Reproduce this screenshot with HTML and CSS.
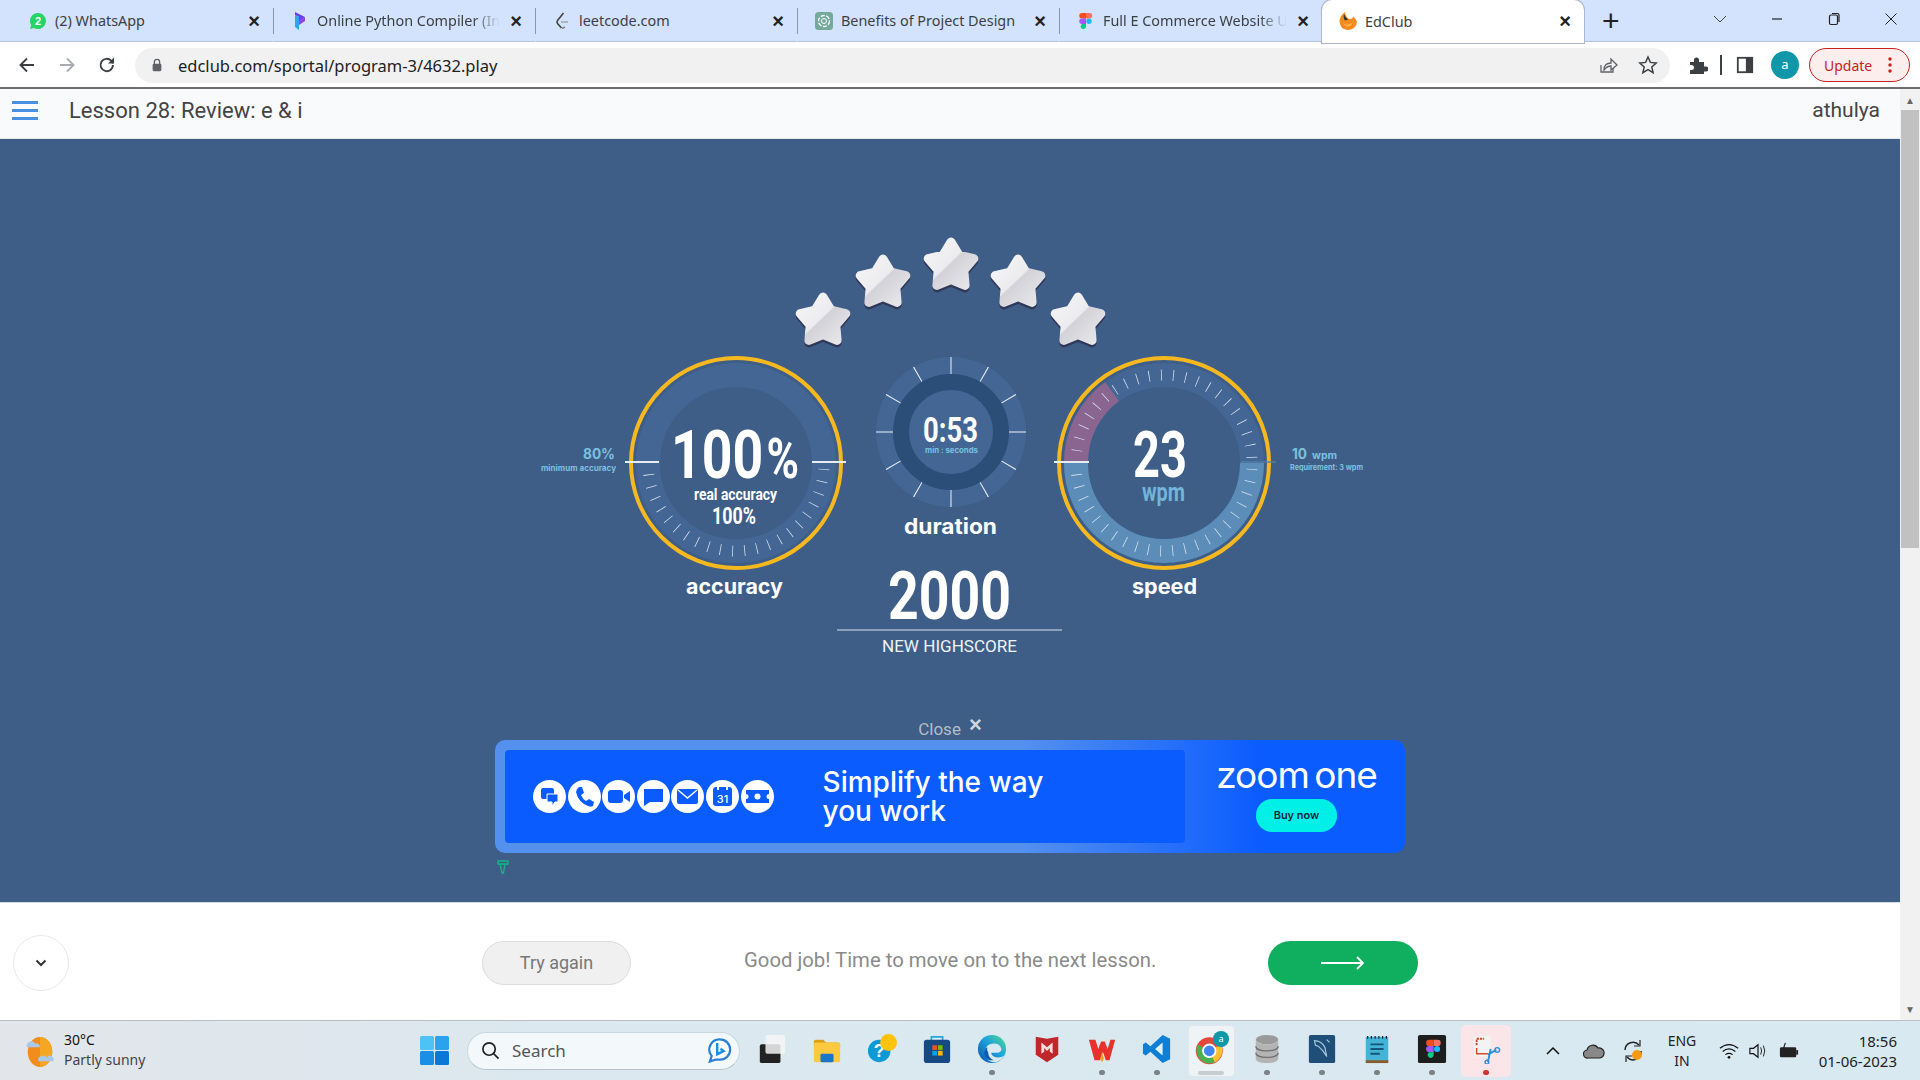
FILE: index.html
```html
<!DOCTYPE html>
<html>
  <head>
    <meta charset='utf-8'>
    <meta name="viewport" content="width=device-width,initial-scale=1.0">
    <title>EdClub</title>
    <link rel="stylesheet" href="styles.css">
  </head>
  <body>
    <!-- browser tabs -->
    <div class="tabbar">
      <div class="tab">
        <svg class="tab-icon" viewBox="0 0 18 18"><path d="M9 1a8 8 0 0 0-6.800 12.200L1 17l3.900-1.100A8 8 0 1 0 9 1z" fill="#25d366"/><text x="9" y="13" class="tab-badge">2</text></svg>
        <span class="tab-title">(2) WhatsApp</span>
        <span class="tab-close">×</span>
      </div>
      <div class="tab">
        <svg class="tab-icon" viewBox="0 0 18 18"><path d="M4 0l10 5-6 5V5L4 3z" fill="#6d3fe8"/><path d="M8 10l6-5v4L8 13z" fill="#8a3fe8"/><path d="M4 3l4 2v13l-4-3z" fill="#2aa7f0"/></svg>
        <span class="tab-title tab-cut">Online Python Compiler (In</span>
        <span class="tab-close">×</span>
      </div>
      <div class="tab">
        <svg class="tab-icon" viewBox="0 0 18 18"><path d="M10.500 1L4.500 8.500q-1 1.500 0 3l4 4.500" fill="none" stroke="#444" stroke-width="1.600"/><path d="M8 10h7" stroke="#aaa" stroke-width="1.600"/><path d="M9 16.500l3-1.500" stroke="#888" stroke-width="1.600"/></svg>
        <span class="tab-title">leetcode.com</span>
        <span class="tab-close">×</span>
      </div>
      <div class="tab">
        <svg class="tab-icon" viewBox="0 0 18 18"><rect x="0" y="0" width="18" height="18" rx="3.500" fill="#74aa9c"/><circle cx="9" cy="9" r="5.500" fill="none" stroke="#fff" stroke-width="1.300" stroke-dasharray="4 1.500"/><circle cx="9" cy="9" r="2.500" fill="none" stroke="#fff" stroke-width="1"/></svg>
        <span class="tab-title">Benefits of Project Design</span>
        <span class="tab-close">×</span>
      </div>
      <div class="tab">
        <svg class="tab-icon" viewBox="0 0 18 18"><use href="#figma-mark"/></svg>
        <span class="tab-title tab-cut">Full E Commerce Website U</span>
        <span class="tab-close">×</span>
      </div>
      <div class="tab tab-active">
        <svg class="tab-icon" viewBox="0 0 18 18"><path d="M6 0q-5 3.500-5.500 9Q1 17.500 9 18q8-.5 9-8-.5-3-4-5.500Q14 7 11 7 7 6.500 6 0z" fill="#f58a1f"/><path d="M5 2Q4 6 6 8.500L9 7.500Q6.500 6 5 2z" fill="#333"/><path d="M4 11q4 4 10-1-2 5-6 4.500-3-.5-4-3.500z" fill="#ffb347"/></svg>
        <span class="tab-title">EdClub</span>
        <span class="tab-close">×</span>
      </div>
      <span class="tab-new">+</span>
      <div class="win-controls">
        <svg viewBox="0 0 14 14" class="win-icon"><path d="M1 4l6 6 6-6" fill="none" stroke="#444" stroke-width="1"/></svg>
        <svg viewBox="0 0 14 14" class="win-icon"><path d="M2 7h10" stroke="#222" stroke-width="1.200"/></svg>
        <svg viewBox="0 0 14 14" class="win-icon"><rect x="2.500" y="3" width="8" height="9.500" rx="1.500" fill="none" stroke="#222" stroke-width="1.200"/><path d="M5 1.500h5.500q1.500 0 1.500 1.500v7" fill="none" stroke="#222" stroke-width="1.200"/></svg>
        <svg viewBox="0 0 14 14" class="win-icon"><path d="M1.500 1.500l11 11M12.500 1.500l-11 11" stroke="#222" stroke-width="1"/></svg>
      </div>
    </div>

    <!-- address bar -->
    <div class="toolbar">
      <svg class="nav-icon" viewBox="0 0 20 20"><path d="M17 10H4M10 3.500L3.500 10l6.500 6.500" fill="none" stroke="#3c4043" stroke-width="1.900"/></svg>
      <svg class="nav-icon" viewBox="0 0 20 20"><path d="M3 10h13M10 3.500l6.500 6.500-6.500 6.500" fill="none" stroke="#a8abaf" stroke-width="1.900"/></svg>
      <svg class="nav-icon" viewBox="0 0 20 20"><path d="M16 10a6.200 6.200 0 1 1-1.800-4.400L16.500 8" fill="none" stroke="#3c4043" stroke-width="1.900"/><path d="M17 2.500V8.500h-6z" fill="#3c4043"/></svg>
      <div class="omnibox">
        <svg class="lock" viewBox="0 0 12 16"><path d="M3 7V4.500a3 3 0 0 1 6 0V7" fill="none" stroke="#5f6368" stroke-width="1.500"/><rect x="1" y="6.500" width="10" height="8.500" rx="1.500" fill="#5f6368"/></svg>
        <span class="url">edclub.com/sportal/program-3/4632.play</span>
        <svg class="omni-icon" viewBox="0 0 20 20"><path d="M3 10v7h12v-4" fill="none" stroke="#5f6368" stroke-width="1.300"/><path d="M6 15q0-7 7-7V4l6 6-6 5v-4q-4 0-7 4z" fill="none" stroke="#5f6368" stroke-width="1.300"/></svg>
        <svg class="omni-icon" viewBox="0 0 20 20"><path d="M10 2l2.400 5.400 5.800.6-4.400 3.900 1.300 5.800L10 14.700l-5.100 3 1.300-5.800L1.800 8l5.800-.6z" fill="none" stroke="#3c4043" stroke-width="1.500"/></svg>
      </div>
      <svg class="ext-icon" viewBox="0 0 20 20"><path d="M2 7h4V5a2.500 2.500 0 0 1 5 0v2h5v4.500h2a2.500 2.500 0 0 1 0 5h-2V19H2v-4h1.500a2.500 2.500 0 0 0 0-5H2z" fill="#3c4043"/></svg>
      <span class="tool-sep"></span>
      <svg class="side-icon" viewBox="0 0 20 20"><rect x="2" y="2" width="16" height="16" fill="none" stroke="#3c4043" stroke-width="2"/><rect x="11" y="2" width="7" height="16" fill="#3c4043"/></svg>
      <span class="avatar">a</span>
      <span class="update">Update<svg class="update-dots" viewBox="0 0 4 18"><circle cx="2" cy="3" r="1.700"/><circle cx="2" cy="9" r="1.700"/><circle cx="2" cy="15" r="1.700"/></svg></span>
    </div>

    <div class="window">
      <div class="page">
        <header class="lesson-head">
          <span class="burger"><i></i><i></i><i></i></span>
          <h1 class="lesson-title">Lesson 28: Review: e &amp; i</h1>
          <span class="lesson-user">athulya</span>
        </header>

        <main class="stage">
          <!-- stars and dials, viewBox uses page coordinates -->
          <svg class="results" viewBox="570 240 760 440">
            <defs>
              <linearGradient id="star-fill" x1="0" y1="0" x2="1" y2="1">
                <stop offset="0" stop-color="#f5f5f7"/>
                <stop offset=".47" stop-color="#ececef"/>
                <stop offset=".5" stop-color="#d2d2d8"/>
                <stop offset="1" stop-color="#e8e8ec"/>
              </linearGradient>
              <g id="star">
                <polygon points="0,-24 7.900,-10.900 22.800,-7.400 12.800,4.200 14.100,19.400 0,13.500 -14.100,19.400 -12.800,4.200 -22.800,-7.400 -7.900,-10.900" transform="translate(0,2.500)" fill="#2c2c4c" stroke="#2c2c4c" stroke-width="9" stroke-linejoin="round" opacity=".75"/>
                <polygon points="0,-24 7.900,-10.900 22.800,-7.400 12.800,4.200 14.100,19.400 0,13.500 -14.100,19.400 -12.800,4.200 -22.800,-7.400 -7.900,-10.900" fill="url(#star-fill)" stroke="url(#star-fill)" stroke-width="9" stroke-linejoin="round"/>
              </g>
              <clipPath id="lower-half"><rect x="570" y="462" width="760" height="120"/></clipPath>
            </defs>

            <use href="#star" x="823" y="320"/>
            <use href="#star" x="883" y="282"/>
            <use href="#star" x="951" y="265"/>
            <use href="#star" x="1018" y="282"/>
            <use href="#star" x="1078" y="320"/>

            <!-- accuracy -->
            <circle cx="736" cy="462" r="88" class="ring" fill="none"/>
            <circle cx="736" cy="462" r="88" class="ticks" pathLength="360" clip-path="url(#lower-half)"/>
            <circle cx="736" cy="462" r="105" class="gold"/>
            <path d="M625 461h34M812 461h34" class="mark"/>
            <text x="671" y="477" class="big" font-size="67" textLength="128" lengthAdjust="spacingAndGlyphs">100<tspan font-size="55" dx="4">%</tspan></text>
            <text x="694" y="499" class="small-bold" font-size="16" textLength="83" lengthAdjust="spacingAndGlyphs">real accuracy</text>
            <text x="712" y="523" class="big" font-size="23" textLength="44" lengthAdjust="spacingAndGlyphs">100%</text>
            <text x="686" y="593" class="dial-name" textLength="97" lengthAdjust="spacingAndGlyphs">accuracy</text>
            <text x="583" y="458" class="hint-big" textLength="32" lengthAdjust="spacingAndGlyphs">80%</text>
            <text x="541" y="470" class="hint" textLength="75" lengthAdjust="spacingAndGlyphs">minimum accuracy</text>

            <!-- duration -->
            <circle cx="951" cy="431" r="75" class="ring-fill"/>
            <circle cx="951" cy="431" r="66.500" class="spokes" pathLength="360"/>
            <circle cx="951" cy="431" r="50" fill="none" stroke="#2a4e78" stroke-width="16"/>
            <text x="923" y="441" class="big" font-size="35" textLength="55" lengthAdjust="spacingAndGlyphs">0:53</text>
            <text x="925" y="452" class="hint" textLength="53" lengthAdjust="spacingAndGlyphs">min : seconds</text>
            <text x="904" y="533" class="dial-name" textLength="93" lengthAdjust="spacingAndGlyphs">duration</text>

            <!-- score -->
            <text x="888" y="618" class="big" font-size="66" textLength="123" lengthAdjust="spacingAndGlyphs">2000</text>
            <path d="M837 629h225" stroke="#8ba0bb" stroke-width="2"/>
            <text x="882" y="651" class="score-label" textLength="135" lengthAdjust="spacingAndGlyphs">NEW HIGHSCORE</text>

            <!-- speed -->
            <circle cx="1164" cy="462" r="88" class="ring" fill="none"/>
            <circle cx="1164" cy="462" r="88" class="ring-speed" clip-path="url(#lower-half)"/>
            <path d="M1064 462A100 100 0 0 1 1105 381L1119 400A76 76 0 0 0 1088 462z" fill="#8a6590"/>
            <circle cx="1164" cy="462" r="88" class="ticks" pathLength="360"/>
            <circle cx="1164" cy="462" r="105" class="gold"/>
            <path d="M1054 461h35" class="mark"/>
            <path d="M1241 461h35" stroke="#4f7ea5" stroke-width="1.500"/>
            <text x="1133" y="476" class="big" font-size="65" textLength="54" lengthAdjust="spacingAndGlyphs">23</text>
            <text x="1142" y="500" class="wpm" textLength="43" lengthAdjust="spacingAndGlyphs">wpm</text>
            <text x="1132" y="593" class="dial-name" textLength="65" lengthAdjust="spacingAndGlyphs">speed</text>
            <text x="1292" y="458" class="hint-big" textLength="15" lengthAdjust="spacingAndGlyphs">10</text>
            <text x="1312" y="458" class="hint hint-unit" textLength="25" lengthAdjust="spacingAndGlyphs">wpm</text>
            <text x="1290" y="469" class="hint" textLength="73" lengthAdjust="spacingAndGlyphs">Requirement: 3 wpm</text>
          </svg>

          <div class="close-row">Close <span class="close-x">×</span></div>

          <div class="ad">
            <div class="ad-panel">
              <div class="ad-icons">
                <svg class="ad-icon" viewBox="0 0 33 33"><circle cx="16.500" cy="16.500" r="16.500" fill="#fff"/><rect x="8" y="8" width="13" height="11" rx="2" fill="#0b5cff"/><path d="M14 14h11v8h-3l-3 4v-4h-5z" fill="#0b5cff" stroke="#fff"/></svg>
                <svg class="ad-icon" viewBox="0 0 33 33"><circle cx="16.500" cy="16.500" r="16.500" fill="#fff"/><path d="M11 7l3 0 2 6-3 2q1.500 4 5 6l3-2 5 3-1 4q-2 1-5 0-10-4-12-14 0-3 3-5z" fill="#0b5cff"/></svg>
                <svg class="ad-icon" viewBox="0 0 33 33"><circle cx="16.500" cy="16.500" r="16.500" fill="#fff"/><rect x="6" y="10" width="15" height="13" rx="3" fill="#0b5cff"/><path d="M22 15l6-4v11l-6-4z" fill="#0b5cff"/></svg>
                <svg class="ad-icon" viewBox="0 0 33 33"><circle cx="16.500" cy="16.500" r="16.500" fill="#fff"/><path d="M7 9h19v13H13l-6 4z" fill="#0b5cff"/></svg>
                <svg class="ad-icon" viewBox="0 0 33 33"><circle cx="16.500" cy="16.500" r="16.500" fill="#fff"/><rect x="6" y="9" width="21" height="15" rx="2" fill="#0b5cff"/><path d="M7 10l9.500 8 9.500-8" fill="none" stroke="#fff" stroke-width="1.500"/></svg>
                <svg class="ad-icon" viewBox="0 0 33 33"><circle cx="16.500" cy="16.500" r="16.500" fill="#fff"/><rect x="7" y="7" width="19" height="19" rx="3" fill="#0b5cff"/><path d="M12 5v5M21 5v5" stroke="#fff" stroke-width="2"/><text x="16.500" y="23" class="ad-cal">31</text></svg>
                <svg class="ad-icon" viewBox="0 0 33 33"><circle cx="16.500" cy="16.500" r="16.500" fill="#fff"/><path d="M5 10h23v4a2.500 2.500 0 0 0 0 5v4H5v-4a2.500 2.500 0 0 0 0-5z" fill="#0b5cff"/><circle cx="16.500" cy="16.500" r="3" fill="#fff"/></svg>
              </div>
              <p class="ad-head">Simplify the way<br>you work</p>
            </div>
            <div class="ad-side">
              <span class="ad-logo">zoom one</span>
              <span class="ad-buy">Buy now</span>
            </div>
          </div>
          <svg class="ad-mark" viewBox="0 0 12 14"><path d="M1 1h10v3H1zM3 4l2 9h1.500L8 4" fill="none" stroke="#12b886" stroke-width="1.300"/></svg>
        </main>

        <footer class="actions">
          <span class="collapse"><svg viewBox="0 0 12 8" class="collapse-icon"><path d="M1.500 1.500L6 6l4.500-4.500" fill="none" stroke="#333" stroke-width="2"/></svg></span>
          <span class="retry">Try again</span>
          <span class="message">Good job! Time to move on to the next lesson.</span>
          <span class="next"><svg viewBox="0 0 44 14" class="next-icon"><path d="M0 7h42M36 1l6 6-6 6" fill="none" stroke="#fff" stroke-width="1.800"/></svg></span>
        </footer>
      </div>

      <div class="scrollbar">
        <span class="scroll-arrow">▲</span>
        <span class="scroll-thumb"></span>
        <span class="scroll-arrow scroll-down">▼</span>
      </div>
    </div>

    <!-- windows taskbar -->
    <div class="taskbar">
      <div class="weather">
        <svg class="weather-icon" viewBox="0 0 34 36"><ellipse cx="17" cy="19" rx="13" ry="16" fill="#f28c1c"/><path d="M17 3a13 16 0 0 1 0 32z" fill="#f5a623"/><path d="M3 14a5 5 0 0 1 9-4 4 4 0 0 1 5 4z" fill="#a9c8ea"/><path d="M15 29a5 5 0 0 1 9-4 4 4 0 0 1 7 4z" fill="#a9c8ea"/></svg>
        <div class="weather-text"><span class="weather-temp">30°C</span><span>Partly sunny</span></div>
      </div>
      <div class="start">
        <svg viewBox="0 0 29 29" class="start-icon"><rect width="14" height="14" rx="1.500" fill="#4cc2f5"/><rect x="15" width="14" height="14" rx="1.500" fill="#2aa3ec"/><rect y="15" width="14" height="14" rx="1.500" fill="#1a8fe3"/><rect x="15" y="15" width="14" height="14" rx="1.500" fill="#0a78d6"/></svg>
      </div>
      <div class="search">
        <svg viewBox="0 0 20 20" class="search-icon"><circle cx="8.500" cy="8.500" r="6.500" fill="none" stroke="#222" stroke-width="1.800"/><path d="M13 13l5.500 5.500" stroke="#222" stroke-width="1.800"/></svg>
        <span class="search-text">Search</span>
        <svg viewBox="0 0 26 28" class="bing-icon"><path d="M13 2a11 11 0 0 1 0 22H8l-6 2 2-6A11 11 0 0 1 13 2z" fill="#fff" stroke="#2a7fd6" stroke-width="2.400"/><path d="M10 6v12l7-3.500-3.500-2.500" fill="none" stroke="#1a8fe3" stroke-width="2.600"/></svg>
      </div>
      <div class="apps">
        <span class="app"><svg viewBox="0 0 32 32"><rect x="3" y="11" width="22" height="20" rx="2" fill="#222"/><rect x="9" y="1" width="21" height="20" rx="2" fill="#f4f4f4" opacity=".85"/></svg></span>
        <span class="app"><svg viewBox="0 0 32 32"><path d="M2 8a2 2 0 0 1 2-2h8l3 3h13a2 2 0 0 1 2 2v2H2z" fill="#dba012"/><rect x="2" y="9" width="28" height="21" rx="2" fill="#fcc93f"/><rect x="9" y="21" width="14" height="9" rx="1.500" fill="#1976c8"/></svg></span>
        <span class="app"><svg viewBox="0 0 32 32"><circle cx="13" cy="18" r="12" fill="#0b9ad6"/><text x="13" y="25" class="app-help">?</text><circle cx="23" cy="9" r="9" fill="#ffc20e"/></svg></span>
        <span class="app"><svg viewBox="0 0 32 32"><path d="M10 7V3h12v4" fill="none" stroke="#29a6e0" stroke-width="1.800"/><rect x="2" y="6" width="28" height="25" rx="3" fill="#174a82"/><rect x="11" y="12" width="5" height="5" fill="#f25022"/><rect x="17" y="12" width="5" height="5" fill="#7fba00"/><rect x="11" y="18" width="5" height="5" fill="#00a4ef"/><rect x="17" y="18" width="5" height="5" fill="#ffb900"/></svg></span>
        <span class="app is-open"><svg viewBox="0 0 32 32"><defs><linearGradient id="edge-fill" x1="1" y1="0" x2="0" y2="1"><stop offset="0" stop-color="#4fdc8a"/><stop offset=".45" stop-color="#1ea3dc"/><stop offset="1" stop-color="#0a50a8"/></linearGradient></defs><circle cx="16" cy="16" r="15" fill="url(#edge-fill)"/><path d="M9 17q1-7 9-7 7 0 8 6 0 4-5 4h-6q1 5 8 5 3 0 6-2-3 7-11 7-3 0-6-2-4-5-3-11z" fill="#d8e9f1"/><path d="M12 20q0 6 6 8-8 1-10-6-1-5 3-8-1 3 1 6z" fill="#0c5cb4"/></svg></span>
        <span class="app"><svg viewBox="0 0 32 32"><path d="M4 3l12 2 12-2v19l-12 8-12-8z" fill="#c0272d"/><path d="M10 9l6 5 6-5v12l-3-2v-4l-3 3-3-3v4l-3 2z" fill="#f5dcdc"/></svg></span>
        <span class="app is-open"><svg viewBox="0 0 32 32"><path d="M2 6h7l3 10 3-8h4l3 8 3-10h5l-6 22h-4l-3-9-3 9H8z" fill="#e8312a"/><path d="M14 26l2-6 2 6-2 4z" fill="#f7a01c"/></svg></span>
        <span class="app is-open"><svg viewBox="0 0 32 32"><path d="M22 1l8 4v22l-8 4-13-12-5 4-3-2V11l3-2 5 4z" fill="#0f7fd6"/><path d="M22 9l-8 7 8 7z" fill="#dff1fc"/></svg></span>
        <span class="app app-chrome is-active"><svg viewBox="0 0 40 40"><circle cx="17" cy="22" r="15" fill="#e5483b"/><path d="M17 22l13-7a15 15 0 0 1-7 20z" fill="#fbc02d"/><path d="M17 22L23 35A15 15 0 0 1 4 15z" fill="#4caf50"/><circle cx="17" cy="22" r="7" fill="#4285f4" stroke="#fff" stroke-width="2"/><circle cx="30" cy="9" r="9" fill="#1097a8"/><text x="30" y="12.500" class="app-avatar">a</text></svg></span>
        <span class="app is-open"><svg viewBox="0 0 32 32"><ellipse cx="16" cy="6" rx="12" ry="5" fill="#9a9a9a"/><path d="M4 6v20c0 3 5 5 12 5s12-2 12-5V6c0 3-5 5-12 5S4 9 4 6z" fill="#b4b4b4"/><path d="M4 13c0 3 5 5 12 5s12-2 12-5M4 20c0 3 5 5 12 5s12-2 12-5" fill="none" stroke="#6f6f6f" stroke-width="1.300"/></svg></span>
        <span class="app is-open"><svg viewBox="0 0 32 32"><rect x="2" y="1" width="28" height="30" rx="2" fill="#1f4e79"/><path d="M8 7q7 0 11 7l2 10-4-6-5-5-3-1zM21 6l3 3" fill="none" stroke="#a8c8e0" stroke-width="1.300"/></svg></span>
        <span class="app is-open"><svg viewBox="0 0 32 32"><rect x="4" y="3" width="24" height="27" fill="#45b3d8"/><rect x="4" y="28" width="24" height="3" fill="#8a5a2b"/><path d="M6 2v3M10 2v3M14 2v3M18 2v3M22 2v3M26 2v3" stroke="#222" stroke-width="1.300"/><path d="M9 11h14M9 16h14M9 21h10" stroke="#14567a" stroke-width="2"/></svg></span>
        <span class="app is-open"><svg viewBox="0 0 32 32"><rect x="1" y="1" width="30" height="30" rx="2" fill="#1e1e1e"/><use href="#figma-mark" transform="translate(7 5) scale(1.200)"/></svg></span>
        <span class="app app-snip"><svg viewBox="0 0 32 32"><rect x="3" y="2" width="18" height="22" rx="2" fill="#f3f3f3"/><path d="M6 12V5h8" fill="none" stroke="#d9472b" stroke-width="2" stroke-dasharray="2.500 1"/><path d="M6 15v6h12" fill="none" stroke="#d9472b" stroke-width="1.500"/><path d="M18 30l3-14M18 22l9-5" stroke="#2c8fd6" stroke-width="2"/><circle cx="17" cy="30" r="2" fill="none" stroke="#2c8fd6" stroke-width="1.500"/><circle cx="28" cy="17" r="2.500" fill="none" stroke="#2c8fd6" stroke-width="1.500"/></svg></span>
      </div>
      <div class="tray">
        <svg viewBox="0 0 16 16" class="tray-chevron"><path d="M2 11l6-6 6 6" fill="none" stroke="#111" stroke-width="1.500"/></svg>
        <svg viewBox="0 0 22 18" class="tray-cloud"><path d="M5 16a4 4 0 0 1-1-8 6 6 0 0 1 11-2 5 5 0 0 1 2 10z" fill="#888" stroke="#222" stroke-width="1.200"/></svg>
        <svg viewBox="0 0 22 24" class="tray-sync"><path d="M3 11A8 8 0 0 1 17 6M19 12a8 8 0 0 1-14 6" fill="none" stroke="#222" stroke-width="1.500"/><path d="M18 1v6h-6M4 23v-6h6" fill="none" stroke="#222" stroke-width="1.200"/><circle cx="15" cy="16" r="5" fill="#f59a12"/></svg>
        <div class="lang"><span>ENG</span><span>IN</span></div>
        <svg viewBox="0 0 22 18" class="tray-wifi"><path d="M1 6q10-8 20 0M4 9.500q7-5.500 14 0M7 13q4-3 8 0" fill="none" stroke="#111" stroke-width="1.300"/><circle cx="11" cy="16" r="1.500" fill="#111"/></svg>
        <svg viewBox="0 0 20 18" class="tray-volume"><path d="M1 6h4l5-4v14l-5-4H1z" fill="none" stroke="#111" stroke-width="1.300"/><path d="M13 5q2 4 0 8M16 3q3 6 0 12" fill="none" stroke="#111" stroke-width="1"/></svg>
        <svg viewBox="0 0 22 18" class="tray-battery"><rect x="1" y="5" width="18" height="11" rx="1.500" fill="#222"/><rect x="19" y="8" width="2" height="5" fill="#222"/><path d="M7 0l-2 6h3l-1 5" fill="none" stroke="#222" stroke-width="1.300"/></svg>
        <div class="clock"><span>18:56</span><span>01-06-2023</span></div>
      </div>
    </div>

    <svg class="defs-holder" width="0" height="0">
      <defs>
        <g id="figma-mark">
          <path d="M5 1h4v5.500H5a2.700 2.700 0 0 1 0-5.500z" fill="#f24e1e"/>
          <path d="M9 1h3.500a2.700 2.700 0 0 1 0 5.500H9z" fill="#ff7262"/>
          <path d="M5 6.500h4V12H5a2.700 2.700 0 0 1 0-5.500z" fill="#a259ff"/>
          <circle cx="12" cy="9.200" r="2.700" fill="#1abcfe"/>
          <path d="M5 12h4v2.500A2.700 2.700 0 1 1 5 12z" fill="#0acf83"/>
        </g>
      </defs>
    </svg>
  </body>
</html>
```

FILE: styles.css
```css
html, body, h1, p {
    margin: 0;
    padding: 0;
}
body {
    width: 1920px;
    height: 1080px;
    overflow: hidden;
    font-family: "Noto Sans", Arial, sans-serif;
    background-color: #fff;
}
svg {
    display: block;
}
.defs-holder {
    position: absolute;
}

/* tabs */
.tabbar {
    height: 42px;
    background-color: #d3e3fd;
    display: flex;
    align-items: center;
    padding-left: 12px;
    box-sizing: border-box;
    border-bottom: 1px solid #b6c3dc;
}
.tab {
    width: 262px;
    height: 42px;
    box-sizing: border-box;
    padding: 0 11px 0 17px;
    display: flex;
    align-items: center;
    gap: 8px;
    border-right: 1px solid #8d97a8;
    background-clip: content-box;
    border-image: linear-gradient(#d3e3fd 20%, #8d97a8 20%, #8d97a8 80%, #d3e3fd 80%) 1;
}
.tab:nth-child(5), .tab-active {
    border-right: 0;
    border-image: none;
}
.tab-active {
    background-color: #fff;
    background-clip: border-box;
    border-radius: 10px 10px 0 0;
    box-shadow: 0 0 0 1px #aab6cc;
    height: 43px;
    margin-top: 1px;
}
.tab-icon {
    width: 18px;
    height: 18px;
    flex: none;
}
.tab-badge {
    font: bold 11px "Liberation Sans", sans-serif;
    fill: #fff;
    text-anchor: middle;
}
.tab-title {
    flex: 1;
    min-width: 0;
    font-size: 14.4px;
    color: #3c4043;
    white-space: nowrap;
    overflow: hidden;
}
.tab-cut {
    -webkit-mask-image: linear-gradient(90deg, #000 85%, transparent 100%);
    mask-image: linear-gradient(90deg, #000 85%, transparent 100%);
}
.tab-close {
    flex: none;
    width: 16px;
    font: bold 20px/20px "Liberation Sans", sans-serif;
    color: #222;
    text-align: center;
}
.tab-new {
    margin-left: 18px;
    font: 500 30px/30px "Liberation Sans", sans-serif;
    color: #222;
}
.win-controls {
    margin-left: auto;
    display: flex;
    gap: 43px;
    padding: 0 22px 4px 0;
}
.win-icon {
    width: 14px;
    height: 14px;
}

/* address bar */
.toolbar {
    height: 47px;
    box-sizing: border-box;
    border-bottom: 2px solid #6d6d6d;
    display: flex;
    align-items: center;
    padding: 1px 8px 0 17px;
    background-color: #fff;
}
.nav-icon {
    width: 20px;
    height: 20px;
    margin-right: 20px;
}
.omnibox {
    margin-left: -2px;
    width: 1535px;
    height: 35px;
    border-radius: 18px;
    background-color: #f1f1f1;
    display: flex;
    align-items: center;
    padding: 0 12px 0 16px;
    box-sizing: border-box;
}
.lock {
    width: 12px;
    height: 14px;
    margin-right: 15px;
}
.url {
    font-size: 16.5px;
    color: #202124;
    flex: 1;
}
.omni-icon {
    width: 20px;
    height: 20px;
    margin-left: 20px;
}
.ext-icon {
    width: 20px;
    height: 20px;
    margin-left: 18px;
}
.tool-sep {
    width: 2px;
    height: 20px;
    margin-left: 12px;
    background-color: #3c4043;
}
.side-icon {
    width: 18px;
    height: 18px;
    margin-left: 14px;
}
.avatar {
    margin-left: 17px;
    width: 28px;
    height: 28px;
    border-radius: 50%;
    background-color: #1097a8;
    color: #fff;
    font-size: 13px;
    line-height: 27px;
    text-align: center;
}
.update {
    margin-left: 10px;
    width: 101px;
    height: 34px;
    box-sizing: border-box;
    border: 1px solid #c5221f;
    border-radius: 17px;
    background-color: #fbeeec;
    color: #c5221f;
    font-size: 14px;
    display: flex;
    align-items: center;
    padding-left: 14px;
    gap: 16px;
}
.update-dots {
    width: 4px;
    height: 18px;
    fill: #c5221f;
}

/* page */
.window {
    height: 931px;
    display: flex;
}
.page {
    flex: 1;
    display: flex;
    flex-direction: column;
}
.lesson-head {
    height: 50px;
    flex: none;
    box-sizing: border-box;
    background-color: #f9fafc;
    display: flex;
    align-items: center;
    padding: 0 20px 7px 12px;
    border-bottom: 1px solid #e4e6e8;
    font-family: Roboto, sans-serif;
}
.burger {
    width: 26px;
    display: flex;
    flex-direction: column;
    gap: 5px;
}
.burger i {
    height: 3px;
    background-color: #4a90e2;
}
.lesson-title {
    margin-left: 31px;
    font-size: 22px;
    font-weight: 400;
    color: #444;
}
.lesson-user {
    margin-left: auto;
    font-size: 21px;
    color: #444;
}
.stage {
    flex: none;
    height: 764px;
    box-sizing: border-box;
    background-color: #3e5e87;
    padding-top: 102px;
    border-bottom: 1px solid #d6dbe0;
    display: flex;
    flex-direction: column;
    align-items: center;
}

/* dials */
.results {
    width: 760px;
    height: 440px;
    flex: none;
    overflow: visible;
}
.ring {
    stroke: #436694;
    stroke-width: 24;
}
.ring-fill {
    fill: #436694;
}
.ring-speed {
    fill: none;
    stroke: #5b8db8;
    stroke-width: 24;
}
.ticks {
    fill: none;
    stroke: #d8e2ee;
    stroke-width: 11;
    stroke-dasharray: .5 7.5;
    stroke-dashoffset: 4;
}
.spokes {
    fill: none;
    stroke: #eef2f7;
    stroke-width: 17;
    stroke-dasharray: .9 29.1;
    stroke-dashoffset: .45;
}
.gold {
    fill: none;
    stroke: #f6b81f;
    stroke-width: 4;
}
.mark {
    stroke: #e8edf3;
    stroke-width: 2;
}
.big {
    font-family: Roboto, sans-serif;
    font-weight: 700;
    fill: #fff;
}
.small-bold {
    font-family: Roboto, sans-serif;
    font-weight: 700;
    fill: #fff;
}
.dial-name {
    font-family: Inter, sans-serif;
    font-weight: 700;
    font-size: 21px;
    fill: #fff;
}
.hint-big {
    font-family: Inter, sans-serif;
    font-weight: 700;
    font-size: 14px;
    fill: #7cc0e0;
}
.hint {
    font-family: Inter, sans-serif;
    font-weight: 700;
    font-size: 8px;
    fill: #7cc0e0;
}
.hint-unit {
    font-size: 10px;
}
.wpm {
    font-family: Roboto, sans-serif;
    font-weight: 700;
    font-size: 25px;
    fill: #73b4d9;
}
.score-label {
    font-family: Roboto, sans-serif;
    font-size: 17px;
    fill: #eef2f7;
}

/* advert */
.close-row {
    margin-top: 37px;
    height: 22px;
    font: 17px/22px Roboto, sans-serif;
    color: #b4bcc8;
    display: flex;
    gap: 8px;
}
.close-x {
    font: bold 22px/14px "Liberation Sans", sans-serif;
    color: #d0d6de;
}
.ad {
    flex: none;
    width: 910px;
    height: 113px;
    box-sizing: border-box;
    padding: 10px 0 10px 10px;
    border-radius: 10px;
    background: linear-gradient(90deg, #5490ee 58%, #0b5cff 84%);
    display: flex;
    font-family: Inter, sans-serif;
}
.ad-panel {
    width: 680px;
    background-color: #0b5cff;
    border-radius: 4px;
    display: flex;
    align-items: center;
    padding-left: 28px;
    box-sizing: border-box;
}
.ad-icons {
    display: flex;
    gap: 1.6px;
}
.ad-icon {
    width: 33px;
    height: 33px;
}
.ad-cal {
    font: 500 11px Inter, sans-serif;
    fill: #fff;
    text-anchor: middle;
}
.ad-head {
    margin-left: 49px;
    font-size: 28px;
    font-weight: 500;
    line-height: 29px;
    color: #fff;
}
.ad-side {
    flex: 1;
    display: flex;
    flex-direction: column;
    align-items: center;
    padding: 8px 0 0 3px;
}
.ad-logo {
    font-size: 37px;
    font-weight: 400;
    line-height: 34px;
    color: #fff;
    letter-spacing: -1px;
    word-spacing: -4px;
    white-space: nowrap;
}
.ad-buy {
    margin-top: 7px;
    width: 81px;
    height: 33px;
    border-radius: 16px;
    background-color: #00f0e8;
    color: #0a2a3a;
    font-size: 11px;
    font-weight: 600;
    line-height: 33px;
    text-align: center;
}
.ad-mark {
    align-self: flex-start;
    margin: 7px 0 0 497px;
    width: 12px;
    height: 14px;
}

/* bottom actions */
.actions {
    flex: 1;
    display: flex;
    align-items: center;
    background-color: #fff;
    padding: 2px 0 0 13px;
    font-family: Roboto, sans-serif;
}
.collapse {
    width: 56px;
    height: 56px;
    box-sizing: border-box;
    border: 1px solid #e8e8e8;
    border-radius: 50%;
    display: flex;
    align-items: center;
    justify-content: center;
}
.collapse-icon {
    width: 12px;
    height: 8px;
}
.retry {
    margin-left: 413px;
    width: 149px;
    height: 44px;
    box-sizing: border-box;
    border: 1px solid #dcdcdc;
    border-radius: 22px;
    background-color: #f0f0f0;
    color: #777;
    font-size: 18px;
    line-height: 42px;
    text-align: center;
}
.message {
    margin: -6px 0 0 113px;
    width: 524px;
    color: #8a8a8a;
    font-size: 20.3px;
}
.next {
    width: 150px;
    height: 44px;
    border-radius: 22px;
    background-color: #10ae5f;
    display: flex;
    align-items: center;
    justify-content: center;
}
.next-icon {
    width: 44px;
    height: 14px;
}

/* scrollbar */
.scrollbar {
    width: 20px;
    flex: none;
    background-color: #f1f1f1;
    display: flex;
    flex-direction: column;
    align-items: center;
    box-sizing: border-box;
    padding: 4px 0;
}
.scroll-arrow {
    font-size: 10px;
    line-height: 14px;
    color: #666;
}
.scroll-thumb {
    margin-top: 3px;
    width: 18px;
    height: 438px;
    background-color: #c1c1c1;
}
.scroll-down {
    margin-top: auto;
}

/* taskbar */
.taskbar {
    height: 60px;
    box-sizing: border-box;
    border-top: 1px solid #b9bfc4;
    background: linear-gradient(90deg, #e2e6ea 0, #dbe8ef 30%, #d8e9f1 100%);
    display: flex;
    align-items: center;
    font-family: "Noto Sans", sans-serif;
    color: #222;
}
.weather {
    width: 408px;
    flex: none;
    display: flex;
    align-items: center;
    gap: 8px;
    padding-left: 24px;
    box-sizing: border-box;
}
.weather-icon {
    width: 32px;
    height: 36px;
}
.weather-text {
    display: flex;
    flex-direction: column;
    font-size: 14px;
    line-height: 20px;
    color: #444;
    margin-top: -2px;
}
.weather-temp {
    color: #111;
}
.start {
    width: 59px;
    flex: none;
    padding-left: 12px;
    box-sizing: border-box;
}
.start-icon {
    width: 29px;
    height: 29px;
}
.search {
    width: 273px;
    height: 38px;
    flex: none;
    box-sizing: border-box;
    border: 1px solid #c8d6de;
    border-bottom-color: #b3c2cb;
    border-radius: 19px;
    background-color: #f3f8fb;
    display: flex;
    align-items: center;
    padding: 0 7px 0 13px;
}
.search-icon {
    width: 19px;
    height: 19px;
}
.search-text {
    margin-left: 12px;
    flex: 1;
    font-size: 17px;
    color: #555;
}
.bing-icon {
    width: 24px;
    height: 27px;
}
.apps {
    margin-left: 4px;
    display: flex;
}
.app {
    position: relative;
    width: 55px;
    height: 52px;
    display: flex;
    align-items: center;
    justify-content: center;
    padding-bottom: 3px;
    box-sizing: border-box;
}
.app svg {
    width: 30px;
    height: 30px;
}
.app-help {
    font: bold 19px "Liberation Sans", sans-serif;
    fill: #fff;
    text-anchor: middle;
}
.app-avatar {
    font: 10px "Noto Sans", sans-serif;
    fill: #fff;
    text-anchor: middle;
}
.app.is-open::after, .app-snip::after, .app-chrome::after {
    content: "";
    position: absolute;
    bottom: 2px;
    left: 25px;
    width: 6px;
    height: 5px;
    border-radius: 3px;
    background-color: #7b8185;
}
.app-chrome {
    background-color: #eef3f6;
    border-radius: 5px;
    box-shadow: inset 0 0 0 1px #dfe7ec;
    width: 47px;
    margin: 0 4px;
}
.app-chrome svg {
    width: 36px;
    height: 36px;
}
.app-chrome.is-active::after {
    left: 10px;
    width: 26px;
    height: 4px;
    background-color: #c6ccd0;
}
.app-snip {
    background-color: #fbe5e8;
    border-radius: 5px;
    width: 50px;
    margin-left: 2px;
}
.app-snip::after {
    left: 22px;
    background-color: #d0342c;
}
.tray {
    flex: 1;
    display: flex;
    align-items: center;
    padding-left: 34px;
}
.tray-chevron {
    width: 16px;
    height: 16px;
}
.tray-cloud {
    width: 22px;
    height: 18px;
    margin-left: 22px;
}
.tray-sync {
    width: 22px;
    height: 24px;
    margin-left: 17px;
}
.lang {
    margin-left: 22px;
    width: 32px;
    display: flex;
    flex-direction: column;
    align-items: center;
    font-size: 14px;
    line-height: 20px;
}
.tray-wifi {
    width: 20px;
    height: 18px;
    margin-left: 21px;
}
.tray-volume {
    width: 18px;
    height: 18px;
    margin-left: 10px;
}
.tray-battery {
    width: 20px;
    height: 18px;
    margin-left: 12px;
}
.clock {
    margin-left: auto;
    padding-right: 23px;
    display: flex;
    flex-direction: column;
    align-items: flex-end;
    font-size: 15px;
    line-height: 20px;
}
```
